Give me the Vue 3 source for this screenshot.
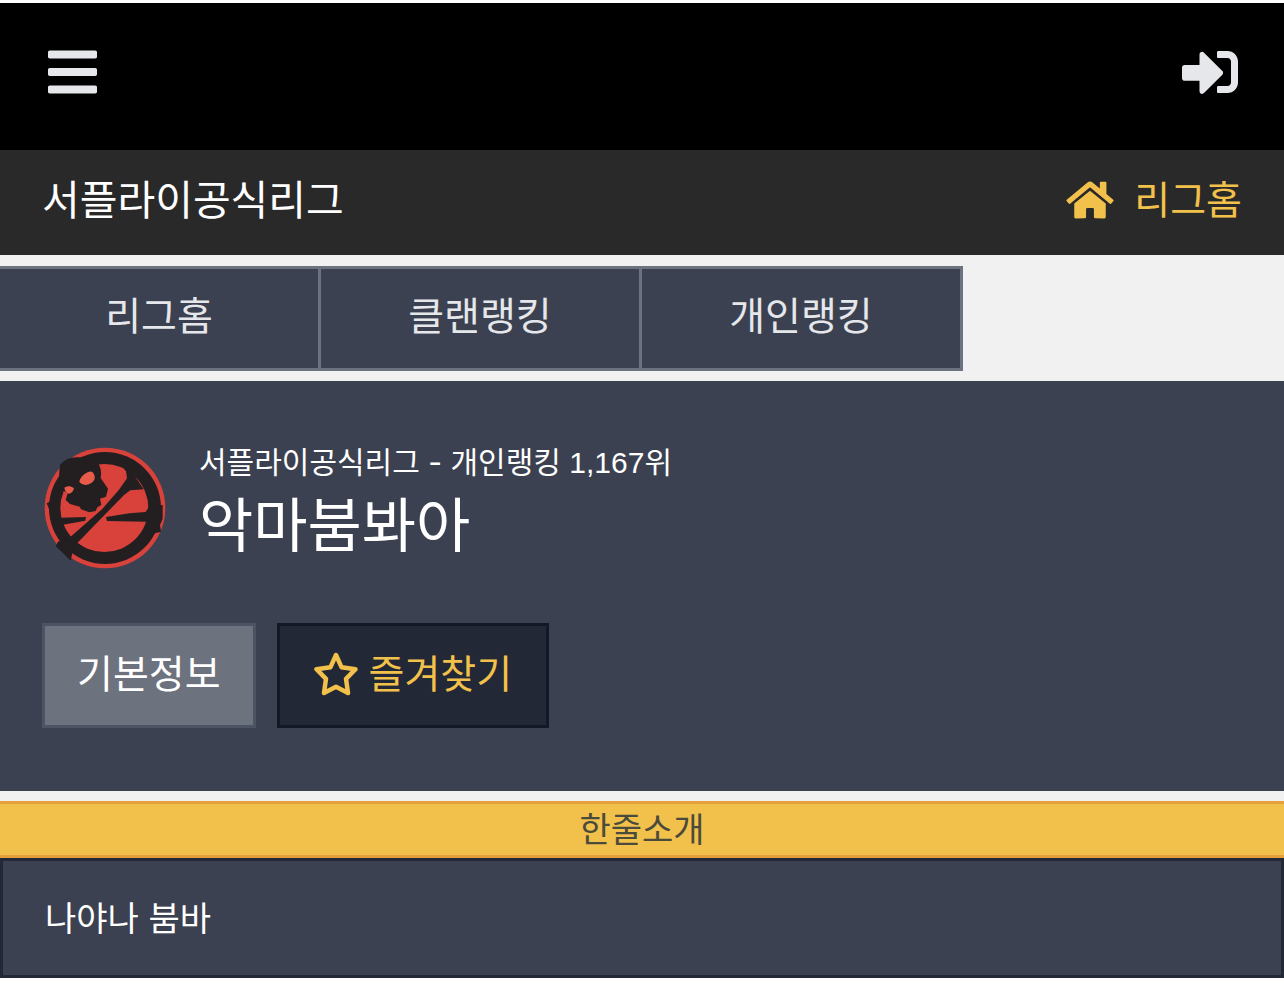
<script setup>
const tabs = ['리그홈', '클랜랭킹', '개인랭킹']
</script>

<template>
  <div class="page">
    <header class="topbar">
      <button class="icon-btn" type="button" aria-label="메뉴">
        <svg class="bars" viewBox="0 0 448 512" aria-hidden="true"><path d="M16 132h416c8.837 0 16-7.163 16-16V76c0-8.837-7.163-16-16-16H16C7.163 60 0 67.163 0 76v40c0 8.837 7.163 16 16 16zm0 160h416c8.837 0 16-7.163 16-16v-40c0-8.837-7.163-16-16-16H16c-8.837 0-16 7.163-16 16v40c0 8.837 7.163 16 16 16zm0 160h416c8.837 0 16-7.163 16-16v-40c0-8.837-7.163-16-16-16H16c-8.837 0-16 7.163-16 16v40c0 8.837 7.163 16 16 16z" /></svg>
      </button>
      <button class="icon-btn" type="button" aria-label="로그인">
        <svg class="login" viewBox="0 0 512 512" aria-hidden="true"><path d="M416 448h-84c-6.600 0-12-5.400-12-12v-40c0-6.600 5.400-12 12-12h84c17.700 0 32-14.300 32-32V160c0-17.700-14.300-32-32-32h-84c-6.600 0-12-5.400-12-12V76c0-6.600 5.400-12 12-12h84c53 0 96 43 96 96v192c0 53-43 96-96 96zm-47-201L201 79c-15-15-41-4.500-41 17v96H24c-13.300 0-24 10.700-24 24v96c0 13.300 10.700 24 24 24h136v96c0 21.500 26 32 41 17l168-168c9.300-9.400 9.300-24.600 0-34z" /></svg>
      </button>
    </header>

    <div class="league">
      <span class="league-name">서플라이공식리그</span>
      <a class="home" href="#">
        <svg class="house" viewBox="0 0 576 512" aria-hidden="true"><path d="M280.370 148.260L96 300.110V464a16 16 0 0 0 16 16l112.060-.290a16 16 0 0 0 15.920-16V368a16 16 0 0 1 16-16h64a16 16 0 0 1 16 16v95.640a16 16 0 0 0 16 16.050L464 480a16 16 0 0 0 16-16V300L295.670 148.260a12.190 12.190 0 0 0-15.300 0zM571.600 251.470L488 182.560V44.050a12 12 0 0 0-12-12h-56a12 12 0 0 0-12 12v72.610L318.470 43a48 48 0 0 0-61 0L4.340 251.470a12 12 0 0 0-1.600 16.900l25.500 31A12 12 0 0 0 45.150 301l235.220-193.740a12.190 12.190 0 0 1 15.300 0L530.900 301a12 12 0 0 0 16.900-1.600l25.500-31a12 12 0 0 0-1.700-16.930z" /></svg>
        <span>리그홈</span>
      </a>
    </div>

    <main class="content">
      <nav class="tabs">
        <a v-for="tab in tabs" :key="tab" class="tab" href="#">{{ tab }}</a>
      </nav>

      <section class="profile">
        <div class="identity">
          <svg class="emblem" viewBox="43 48 366 366" role="img" aria-label="클랜 마크">
            <circle cx="226" cy="231" r="181" fill="#d9413b" />
            <circle cx="226" cy="231" r="168" fill="#231f20" />
            <circle cx="224" cy="231" r="132" fill="#d9413b" />
            <path fill="#231f20" d="M92 100Q113 76 148 79Q191 78 208 101Q217 117 213 141L235 173L229 197L211 203L215 222L203 229L198 240L179 244L154 235L150 227L121 219L108 207L114 187L97 176Q83 138 92 100z" />
            <path fill="#231f20" d="M258 84L274 82L303 105L316 136L342 175L302 178L283 192L132 347L123 389L78 345L86 331L109 329L217 235L268 176L292 142L289 121z" />
            <path fill="#231f20" d="M51 217L63 211L91 260L169 258L167 269L92 283L71 266zM229 258L299 247L348 243L361 222H399V263L391 282L394 302L370 308L348 272L232 270z" />
            <path fill="#e85b4b" d="M149 153Q151 138 166 128Q185 116 191 126Q202 144 185 156Q163 169 149 153zM104 170Q110 164 121 166L133 171Q130 186 118 188Q107 186 104 170z" />
          </svg>
          <div class="who">
            <p class="rank">서플라이공식리그 - 개인랭킹 <span class="number">1,167</span>위</p>
            <h1 class="name">악마붐봐아</h1>
          </div>
        </div>
        <div class="actions">
          <button class="btn info" type="button">기본정보</button>
          <button class="btn favorite" type="button">
            <svg class="star" viewBox="0 0 44 44" aria-hidden="true"><path d="M22 3L27.500 15.200L41.500 17.200L32 26.800L34 41L22 34.800L10 41L12 26.800L2.500 17.200L16.500 15.200Z" /></svg>
            <span>즐겨찾기</span>
          </button>
        </div>
      </section>

      <section class="intro">
        <h2 class="intro-title">한줄소개</h2>
        <p class="intro-text">나야나 붐바</p>
      </section>
    </main>
  </div>
</template>

<style>
body {
  background: #fff;
}
</style>

<style scoped>
.page {
  padding-top: 3px;
  font-family: Inter, "Noto Sans CJK KR", sans-serif;
  font-weight: 400;
  font-size: 39px;
  line-height: 56px;
  color: #fff;
}
.page * {
  box-sizing: border-box;
}
p,
h1,
h2 {
  margin: 0;
  font-weight: inherit;
}
a {
  color: inherit;
  text-decoration: none;
}
button {
  font: inherit;
  cursor: pointer;
}
svg {
  display: block;
  flex: none;
}
.topbar {
  display: flex;
  justify-content: space-between;
  align-items: center;
  padding: 41px 46px 50px 48px;
  background: #000;
}
.icon-btn {
  padding: 0;
  border: 0;
  background: none;
}
.icon-btn svg {
  height: 56px;
  fill: #e5e7eb;
}
.bars {
  width: 49px;
}
.login {
  width: 56px;
}
.league {
  display: flex;
  justify-content: space-between;
  align-items: center;
  padding: 22px 42px 27px;
  background: #292929;
}
.league-name {
  font-size: 41px;
}
.home {
  display: flex;
  align-items: center;
  gap: 20px;
  color: #f2c14b;
}
.house {
  width: 48px;
  height: 42px;
  fill: currentColor;
}
.content {
  background: #f1f1f1;
}
.tabs {
  display: grid;
  grid-template-columns: repeat(4, 1fr);
  padding: 11px 0 10px;
}
.tab {
  padding: 19px 0 24px;
  border: 3px solid #6c727f;
  border-left: 0;
  background: #3b4150;
  color: #e5e7eb;
  text-align: center;
}
.profile {
  padding: 60px 42px 63px;
  background: #3b4150;
}
.identity {
  display: flex;
  align-items: center;
  gap: 33px;
  padding-left: 2px;
}
.emblem {
  width: 122px;
  height: 122px;
}
.who {
  padding-bottom: 6px;
}
.rank {
  font-size: 30px;
  line-height: 42px;
}
.number {
  font-family: "Liberation Sans", sans-serif;
}
.name {
  font-size: 59px;
  line-height: 84px;
}
.actions {
  display: flex;
  gap: 21px;
  margin-top: 49px;
}
.btn {
  display: flex;
  align-items: center;
  padding: 20px 32px 23px;
  border: 3px solid #4c5362;
  background: #6c727e;
  color: #fff;
}
.favorite {
  gap: 11px;
  padding-right: 34px;
  padding-left: 34px;
  border-color: #121826;
  background: #222835;
  color: #f2c14b;
}
.star {
  width: 44px;
  height: 44px;
  fill: none;
  stroke: currentColor;
  stroke-width: 4.500;
  stroke-linejoin: round;
}
.intro {
  padding-top: 10px;
  font-size: 34px;
}
.intro-title {
  padding: 2px 0 1px;
  border: solid #e5a03c;
  border-width: 3px 0;
  background: #f2c14b;
  color: #4b4b3c;
  font-size: 34px;
  line-height: 48px;
  text-align: center;
}
.intro-text {
  padding: 34px 42px 32px;
  border: 3px solid #222835;
  background: #3b4150;
  line-height: 48px;
}
</style>
